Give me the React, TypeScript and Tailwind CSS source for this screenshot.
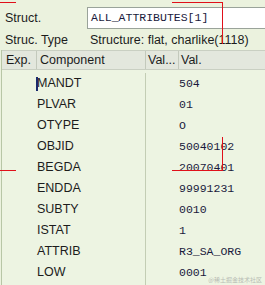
const rows = [
  ["MANDT", "504"],
  ["PLVAR", "01"],
  ["OTYPE", "O"],
  ["OBJID", "50040102"],
  ["BEGDA", "20070401"],
  ["ENDDA", "99991231"],
  ["SUBTY", "0010"],
  ["ISTAT", "1"],
  ["ATTRIB", "R3_SA_ORG"],
  ["LOW", "0001"],
];

export default function App() {
  return (
    <div className="relative w-[265px] h-[285px] overflow-hidden bg-[#ebf2de] text-[#1c1c1c] font-['Liberation_Sans',Arial,sans-serif] text-[12.5px] leading-none">
      {/* header fields */}
      <div className="flex items-center h-[22px] mt-[7px]">
        <span className="w-[87px] pl-[5px]">Struct.</span>
        <div className="flex-1 h-[22px] bg-white border border-[#9aa39a] border-r-0 flex items-center pl-[3px] font-['Liberation_Mono',monospace] text-[11.5px] text-[#1a1a3c]">
          ALL_ATTRIBUTES[1]
        </div>
      </div>
      <div className="flex items-center h-[18px] mt-[2px]">
        <span className="w-[90px] pl-[5px]">Struc. Type</span>
        <span>Structure: flat, charlike(1118)</span>
      </div>

      {/* table */}
      <div className="mt-px ml-px border-l border-[#b8c6a6] h-[300px] bg-[#edf4e2]">
        <div className="grid grid-cols-[35px_109px_33px_1fr] h-[20px] bg-[#e3e7dd] border-t border-b border-[#c9cfc2]">
          <div className="pl-[4px] flex items-center border-r border-[#c3c9bc]">Exp.</div>
          <div className="pl-[3px] flex items-center border-r border-[#c3c9bc]">Component</div>
          <div className="pl-[2px] flex items-center border-r border-[#c3c9bc]">Val...</div>
          <div className="pl-[2px] flex items-center">Val.</div>
        </div>
        <div className="grid grid-cols-[144px_1fr] pt-[3px]">
          <div className="border-r border-[#c3cdb4] flex flex-col h-[230px]">
            {rows.map(([name], i) => (
              <div key={name} className="h-[21px] flex items-center pl-[35px]">
                {i === 0 && <span className="absolute w-[2px] h-[14px] -ml-px bg-[#1a2a6c]" />}
                {name}
              </div>
            ))}
          </div>
          <div className="flex flex-col">
            {rows.map(([name, val]) => (
              <div key={name} className="h-[21px] flex items-center pl-[33px] font-['Liberation_Mono',monospace] text-[11.5px] text-[#1a1a3c]">
                {val}
              </div>
            ))}
          </div>
        </div>
      </div>

      {/* red annotation marks */}
      <div className="absolute left-0 top-[2px] w-[16px] h-px bg-[#e0101a]" />
      <div className="absolute left-[172px] top-[2px] w-[51px] h-px bg-[#e0101a]" />
      <div className="absolute left-[222px] top-[2px] w-px h-[42px] bg-[#e0101a]" />
      <div className="absolute left-0 top-[170px] w-[16px] h-px bg-[#e0101a]" />
      <div className="absolute left-[172px] top-[170px] w-[51px] h-px bg-[#e0101a]" />
      <div className="absolute left-[222px] top-[137px] w-px h-[34px] bg-[#e0101a]" />

      <span className="absolute right-[3px] bottom-[2px] text-[6px] text-[#b8bcb4] font-['Noto_Sans_CJK_SC',sans-serif]">@稀土掘金技术社区</span>
    </div>
  );
}
